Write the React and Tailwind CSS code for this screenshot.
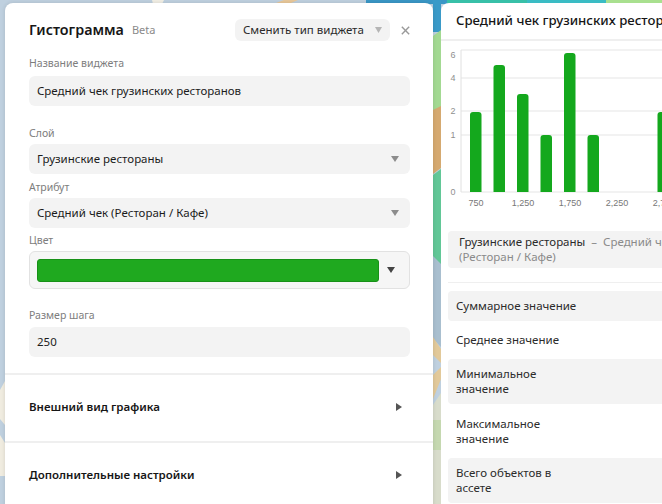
import React from 'react'

function Caret({ className = 'text-[#8c8c8c]', width = 8 }) {
  return (
    <svg width={width} height="6" viewBox="0 0 10 7" preserveAspectRatio="none" className={className}>
      <path d="M0 0h10L5 7z" fill="currentColor" />
    </svg>
  )
}

function MapBackdrop() {
  return (
    <svg className="absolute inset-0" width="662" height="504" viewBox="0 0 662 504">
      <rect width="662" height="504" fill="#bfd0df" />
      <path d="M152 0h12l-2 4h-9z" fill="#f1eee4" />
      <path d="M276 3l8-3h14l-7 3z" fill="#e8c89a" />
      <rect x="366" width="140" height="4" fill="#3a97c6" />
      <rect x="447" width="80" height="3" fill="#38c0a8" />
      <rect x="527" width="80" height="3" fill="#3abcc4" />
      <rect x="606" width="56" height="3" fill="#a9e08f" />
      <path d="M433 0h8v32h-8z" fill="#3a9ac8" />
      <path d="M433 36l8-6v82h-8z" fill="#a3d992" />
      <path d="M433 110l8-4v62l-8 6z" fill="#d5a970" />
      <path d="M433 175l8-6v96l-8-8z" fill="#62c797" />
      <path d="M433 256l8 8v83l-8-8z" fill="#a9bfcf" />
      <path d="M433 337l8 12v14l-8-8v20l8-8v12l-8 20z" fill="#e2c99a" />
      <path d="M433 405l8-12v111h-8z" fill="#d8dccb" />
      <path d="M433 420h8v30h-8z" fill="#c5d8b0" />
      <path d="M0 390l5-9v44l-5-6z" fill="#f0ece0" />
      <path d="M0 435l5 8v33H0z" fill="#f0ece0" />
    </svg>
  )
}

function Field({ label, value, select, className = '', labelClass = 'mb-[4px]' }) {
  return (
    <div className={className}>
      <div className={`text-[10.5px] leading-[14px] text-[#7d7d7d] ${labelClass}`}>{label}</div>
      <div className="h-[30px] rounded-md bg-[#f3f3f3] pl-2 pr-[11px] flex items-center justify-between text-[11.5px] text-[#1c1c1c]">
        <span>{value}</span>
        {select && <Caret />}
      </div>
    </div>
  )
}

function Section({ title }) {
  return (
    <div className="h-[68px] border-t-2 border-[#efefef] pl-6 pr-[31px] pb-[2px] flex items-center justify-between">
      <span className="text-[11.5px] font-semibold text-[#161616]">{title}</span>
      <svg width="6" height="8" viewBox="0 0 7 9" preserveAspectRatio="none" className="text-[#555]">
        <path d="M0 0l7 4.5L0 9z" fill="currentColor" />
      </svg>
    </div>
  )
}

function Settings() {
  return (
    <div className="w-[428px] h-[600px] shrink-0 bg-white rounded-lg shadow-[0_0_4px_rgba(0,0,0,0.12)]">
      <div className="pl-6 pr-[23px] pt-4">
        <div className="h-[22px] flex items-center">
          <span className="text-[14.3px] font-semibold text-[#161616]">Гистограмма</span>
          <span className="ml-2 text-[11px] text-[#8a8a8a]">Beta</span>
          <div className="ml-auto w-[155px] h-[22px] rounded-md bg-[#f3f3f3] pl-2 pr-[8px] flex items-center justify-between text-[11.5px] text-[#2a2a2a]">
            <span>Сменить тип виджета</span>
            <Caret className="text-[#b5b5b5]" width={7} />
          </div>
          <svg width="9" height="9" viewBox="0 0 11 11" className="ml-[11px] text-[#999]">
            <path d="M1 1l9 9M10 1l-9 9" stroke="currentColor" strokeWidth="1.7" fill="none" />
          </svg>
        </div>
        <Field className="mt-[15px]" labelClass="mb-[6px]" label="Название виджета" value="Средний чек грузинских ресторанов" />
        <Field className="mt-5" label="Слой" value="Грузинские рестораны" select />
        <Field className="mt-[6px]" label="Атрибут" value="Средний чек (Ресторан / Кафе)" select />
        <div className="mt-[5px] text-[10.5px] leading-[14px] text-[#7d7d7d]">Цвет</div>
        <div className="mt-[4px] h-[38px] rounded-md bg-[#f6f6f6] border border-[#e2e2e2] pl-[7px] pr-[14px] flex items-center justify-between">
          <div className="w-[342px] h-[23px] rounded-[3px] bg-[#1fa91f] border border-[#189118]" />
          <Caret className="text-[#444]" />
        </div>
        <Field className="mt-[19px]" labelClass="mb-[5px]" label="Размер шага" value="250" />
      </div>
      <div className="mt-4">
        <Section title="Внешний вид графика" />
        <Section title="Дополнительные настройки" />
      </div>
    </div>
  )
}

function Chart() {
  const grid = [
    [50, '6', 55],
    [78, '4', 78],
    [111, '2', 111],
    [135, '1', 135],
    [192, '0', 192],
  ]
  const bars = [
    [470, 112],
    [493.5, 65],
    [517, 94],
    [540.5, 135],
    [564, 53],
    [587.5, 135],
    [657.5, 112],
  ]
  const ticks = [
    [476, '750'],
    [523, '1,250'],
    [570, '1,750'],
    [617, '2,250'],
    [664, '2,750'],
  ]
  return (
    <svg width="221" height="170" viewBox="441 44 221 170" className="block mt-[3px]" fontFamily="'Liberation Sans', sans-serif">
      {grid.map(([y, label, ty]) => (
        <g key={label}>
          <line x1="461" x2="662" y1={y} y2={y} stroke="#e6e6e6" strokeWidth="1.2" />
          <text x="453" y={ty + 3} fontSize="9" fill="#8f8f8f" textAnchor="middle">{label}</text>
        </g>
      ))}
      <line x1="461" x2="461" y1="50" y2="192" stroke="#e0e0e0" />
      {bars.map(([x, top]) => (
        <path
          key={x}
          d={`M${x} 192V${top + 3}a3 3 0 0 1 3-3h5.5a3 3 0 0 1 3 3V192z`}
          fill="#14a81d"
        />
      ))}
      {ticks.map(([x, label]) => (
        <text key={label} x={x} y="206" fontSize="9" fill="#777" textAnchor="middle">{label}</text>
      ))}
    </svg>
  )
}

function StatRow({ children, shaded, className = '' }) {
  return (
    <div className={`px-2 pt-[6.5px] pb-[8.5px] rounded text-[11.5px] leading-[15px] text-[#2b2b2b] ${shaded ? 'bg-[#f3f3f3]' : 'bg-white'} ${className}`}>
      <div className="w-[124px]">{children}</div>
    </div>
  )
}

function Widget() {
  return (
    <div className="w-[400px] h-[600px] shrink-0 bg-white rounded-lg">
      <div className="h-[38px] border-b-2 border-[#efefef] pl-[15px] flex items-center text-[13.2px] font-medium text-[#161616] whitespace-nowrap">
        Средний чек грузинских ресторанов
      </div>
      <Chart />
      <div className="mt-[17px] ml-[7px] h-[37px] rounded bg-[#f3f3f3] pl-[11px] pt-[3px] text-[11.5px] leading-[15px] text-[#8a8a8a]">
        <div className="whitespace-nowrap">
          <span className="text-[#2b2b2b]">Грузинские рестораны</span>
          <span className="mx-[6px]">–</span>Средний чек
        </div>
        <div>(Ресторан / Кафе)</div>
      </div>
      <div className="mt-[14px] ml-[7px] border-t border-[#efefef] pt-[8px] flex flex-col gap-1">
        <StatRow shaded>Суммарное значение</StatRow>
        <StatRow>Среднее значение</StatRow>
        <StatRow shaded>Минимальное значение</StatRow>
        <StatRow className="mt-px">Максимальное значение</StatRow>
        <StatRow shaded>Всего объектов в ассете</StatRow>
      </div>
    </div>
  )
}

export default function App() {
  return (
    <div className="relative w-[662px] h-[504px] overflow-hidden font-['Noto_Sans','Open_Sans',sans-serif]">
      <MapBackdrop />
      <div className="relative flex gap-2 pl-[5px] pt-[3px]">
        <Settings />
        <Widget />
      </div>
    </div>
  )
}
